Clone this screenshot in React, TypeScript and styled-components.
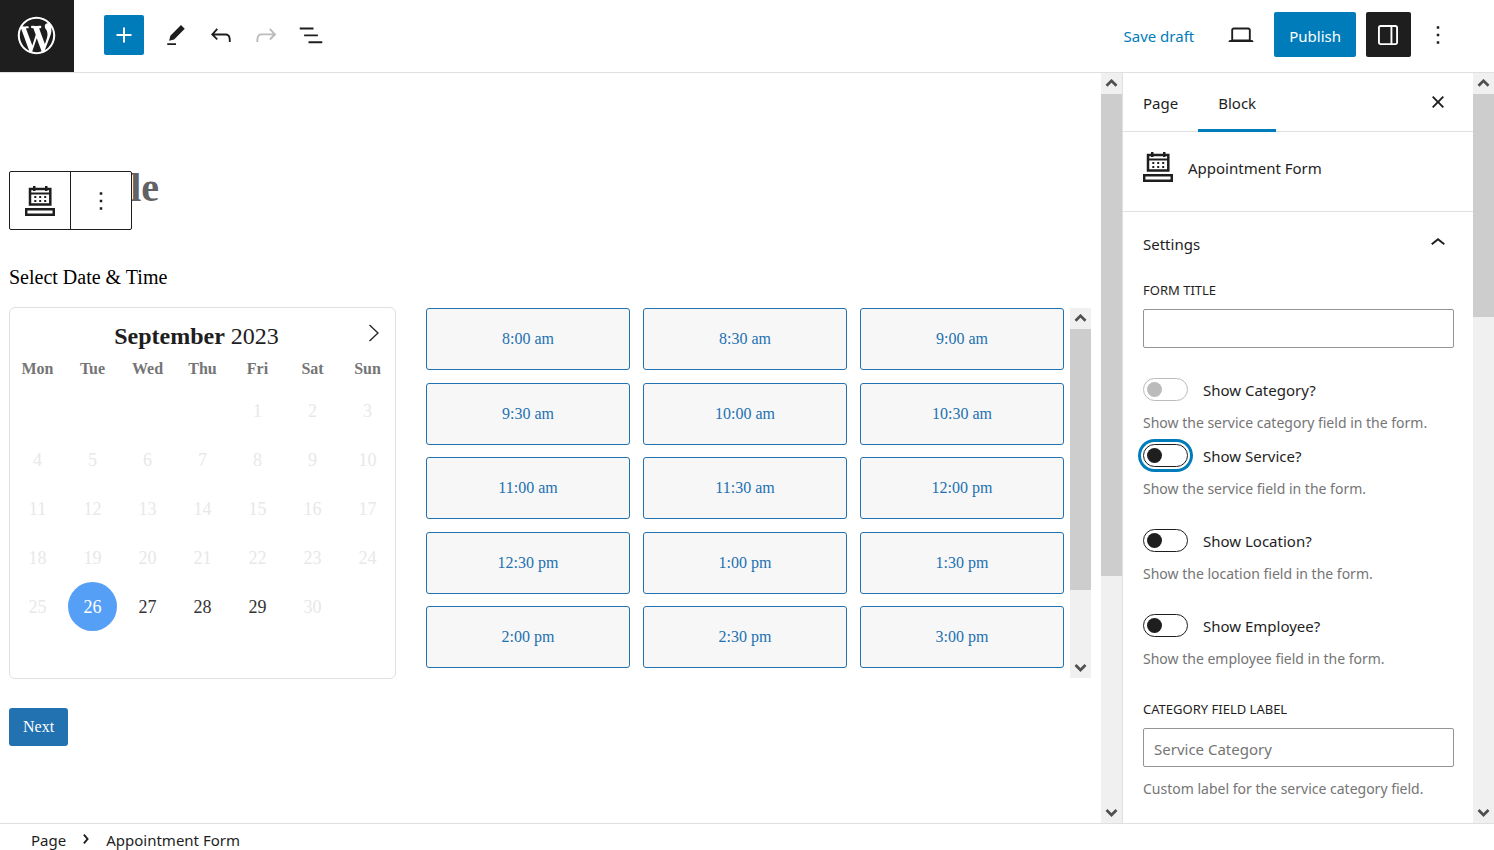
import React, { useId, useState } from "react";
import styled, { createGlobalStyle, css } from "styled-components";

const SANS = `"Noto Sans", "Open Sans", sans-serif`;
const SERIF = `"Liberation Serif", "Times New Roman", serif`;
const INK = "#1e1e1e";
const BLUE = "#007cba";
const LINE = "#e0e0e0";

const GlobalStyle = createGlobalStyle`
  *, *::before, *::after { box-sizing: border-box; }
  body { margin: 0; background: #fff; color: ${INK}; font-family: ${SANS}; font-size: 15px; line-height: 20px; }
  button, input { font: inherit; color: inherit; }
  button { padding: 0; border: 0; background: none; cursor: pointer; }
  h1, h2, p { margin: 0; font-weight: 400; }
  svg { display: block; }
`;

const Shell = styled.div`
  display: flex;
  flex-direction: column;
  height: 100vh;
  overflow: hidden;
`;

const Header = styled.header`
  display: flex;
  align-items: center;
  justify-content: space-between;
  height: 73px;
  flex: none;
  border-bottom: 1px solid ${LINE};
`;

const HeaderGroup = styled.div`
  display: flex;
  align-items: center;
  height: 72px;
`;

const LogoLink = styled.a`
  display: grid;
  place-items: center;
  width: 74px;
  height: 72px;
  margin-right: 30px;
  padding: 0 1px 1px 0;
  background: ${INK};
  color: #fff;
`;

const HeaderTools = styled.div`
  display: flex;
  align-items: center;
  padding-bottom: 2px;
`;

const InserterButton = styled.button`
  display: grid;
  place-items: center;
  width: 40px;
  height: 40px;
  margin-right: 10px;
  border-radius: 2px;
  background: ${BLUE};
  color: #fff;
`;

const IconButton = styled.button<{ $pressed?: boolean }>`
  display: grid;
  place-items: center;
  width: 45px;
  height: 45px;
  padding-right: 1px;
  border-radius: 2px;
  color: ${INK};
  ${(p) => p.$pressed && css`background: ${INK}; color: #fff;`}
  &:disabled { color: #bbb; }
`;

const HeaderActions = styled.div`
  display: flex;
  align-items: center;
  gap: 10px;
  padding: 0 38px 3px 0;
`;

const DraftButton = styled.button`
  color: ${BLUE};
  padding: 3px 15px 0 0;
`;

const PublishButton = styled.button`
  height: 45px;
  padding: 3px 15px 0;
  border-radius: 2px;
  background: ${BLUE};
  color: #fff;
`;

const MoreButton = styled(IconButton)`
  width: 35px;
`;

const Workspace = styled.div`
  display: flex;
  flex: 1;
  min-height: 0;
`;

const EditorPane = styled.main`
  display: flex;
  flex: 1;
  min-width: 0;
`;

const Canvas = styled.div`
  flex: 1;
  min-width: 0;
  overflow: hidden;
  padding: 92px 10px 0 9px;
  font-family: ${SERIF};
`;

const TitleArea = styled.div`
  position: relative;
`;

const PageTitle = styled.h1`
  font-size: 40px;
  line-height: 46px;
  font-weight: 700;
  color: #626264;
`;

const BlockToolbar = styled.div`
  position: absolute;
  top: 6px;
  left: 0;
  display: flex;
  width: 123px;
  height: 59px;
  border: 1px solid ${INK};
  border-radius: 2px;
  background: #fff;
`;

const BlockToolbarButton = styled.button`
  display: grid;
  place-items: center;
  flex: 1;
  & + & { border-left: 1px solid ${INK}; }
`;

const FormHeading = styled.h2`
  margin: 54px 0 18px;
  font-size: 20px;
  line-height: 24px;
  color: #000;
`;

const BookingRow = styled.div`
  display: flex;
  align-items: center;
  gap: 30px;
`;

const CalendarBox = styled.section`
  flex: 0 0 387px;
  height: 372px;
  border: 1px solid ${LINE};
  border-radius: 6px;
`;

const CalendarHead = styled.div`
  display: grid;
  grid-template-columns: 30px 1fr 42px;
  align-items: center;
  height: 48px;
  padding-top: 8px;
`;

const MonthLabel = styled.div`
  grid-column: 2;
  text-align: center;
  font-size: 24px;
  line-height: 28px;
`;

const NextMonthButton = styled.button`
  display: grid;
  place-items: center;
  height: 32px;
  padding-bottom: 6px;
`;

const CalendarTable = styled.table`
  width: 100%;
  table-layout: fixed;
  border-collapse: collapse;
  text-align: center;
  th { padding: 3px 0 7px; height: 30px; font-size: 16px; line-height: 20px; color: #757575; }
  td { padding: 0; height: 49px; }
`;

const DayButton = styled.button<{ $selected: boolean }>`
  width: 49px;
  height: 49px;
  border-radius: 50%;
  font-size: 18px;
  color: #333;
  &:disabled { color: #e8e8e8; }
  ${(p) => p.$selected && css`background: #569ff7; color: #fff;`}
`;

const SlotPane = styled.div`
  display: flex;
  flex: 1;
  gap: 6px;
  height: 370px;
`;

const SlotGrid = styled.div`
  display: grid;
  flex: 1;
  grid-template-columns: repeat(3, 1fr);
  grid-auto-rows: 62px;
  align-content: space-between;
  column-gap: 13px;
  height: 360px;
`;

const SlotButton = styled.button`
  border: 1px solid #2271b1;
  border-radius: 3px;
  background: #f7f7f7;
  color: #2271b1;
  font-size: 16px;
`;

const NextButton = styled.button`
  height: 38px;
  margin-top: 29px;
  padding: 0 14px;
  border-radius: 3px;
  background: #2271b1;
  color: #fff;
  font-size: 16px;
`;

const Sidebar = styled.aside`
  display: flex;
  flex: 0 0 372px;
  border-left: 1px solid ${LINE};
`;

const SidebarBody = styled.div`
  flex: 1;
  min-width: 0;
  overflow: hidden;
`;

const TabBar = styled.div`
  display: flex;
  height: 59px;
  border-bottom: 1px solid ${LINE};
`;

const Tab = styled.button<{ $active: boolean }>`
  height: 59px;
  padding: 1px 20px 0;
  ${(p) => p.$active && css`box-shadow: inset 0 -3px 0 ${BLUE};`}
`;

const CloseButton = styled.button`
  display: grid;
  place-items: center;
  width: 30px;
  margin: 0 20px 0 auto;
`;

const BlockCard = styled.div`
  display: flex;
  align-items: center;
  gap: 15px;
  height: 80px;
  padding: 0 20px;
  border-bottom: 1px solid ${LINE};
`;

const BlockName = styled.h2`
  padding-bottom: 8px;
  font-size: 15px;
  line-height: 20px;
`;

const CardIcon = styled.span`
  padding-bottom: 10px;
`;

const PanelToggle = styled.button`
  display: flex;
  align-items: center;
  justify-content: space-between;
  width: 100%;
  height: 64px;
  padding: 0 20px;
  svg { margin-bottom: 2px; }
`;

const PanelFields = styled.div`
  padding: 4px 19px 0 20px;
`;

const Field = styled.div`
  margin-bottom: 30px;
`;

const FieldLabel = styled.label`
  display: block;
  margin-bottom: 9px;
  font-size: 13px;
  line-height: 20px;
  text-transform: uppercase;
`;

const TextInput = styled.input`
  display: block;
  width: 100%;
  height: 39px;
  padding: 3px 10px 0;
  border: 1px solid #949494;
  border-radius: 2px;
  background: #fff;
  &::placeholder { color: #757575; opacity: 1; }
`;

const Help = styled.p`
  margin-top: 12px;
  font-size: 14px;
  line-height: 20px;
  color: #757575;
  white-space: nowrap;
`;

const ToggleField = styled.div<{ $tight?: boolean }>`
  margin-bottom: ${(p) => (p.$tight ? 11 : 30)}px;
`;

const ToggleRow = styled.div`
  display: flex;
  align-items: center;
  gap: 15px;
  height: 23px;
  label { padding-top: 1px; }
`;

const Switch = styled.input<{ $ring?: boolean }>`
  appearance: none;
  flex: none;
  display: flex;
  align-items: center;
  width: 45px;
  height: 23px;
  margin: 0;
  padding: 0 3px;
  border: 1px solid ${INK};
  border-radius: 12px;
  background: #fff;
  &::before {
    content: "";
    width: 15px;
    height: 15px;
    border-radius: 50%;
    background: ${INK};
  }
  &:checked { justify-content: flex-end; }
  &:disabled { border-color: #bbb; }
  &:disabled::before { background: #bbb; }
  ${(p) => p.$ring && css`box-shadow: 0 0 0 2px #fff, 0 0 0 5px ${BLUE};`}
`;

const ScrollTrack = styled.div`
  display: flex;
  flex-direction: column;
  flex: none;
  width: 21px;
  background: #f0f0f0;
`;

const ScrollArrow = styled.span`
  display: grid;
  place-items: center;
  flex: none;
  height: 21px;
`;

const ScrollThumb = styled.div<{ $size: number }>`
  flex: ${(p) => p.$size} 0 0;
  background: #cdcdcd;
`;

const ScrollRest = styled.div<{ $size: number }>`
  flex: ${(p) => p.$size} 0 0;
`;

const Footer = styled.footer`
  display: flex;
  align-items: center;
  flex: none;
  height: 27px;
  padding: 6px 0 0 31px;
  border-top: 1px solid ${LINE};
`;

const Crumb = styled.button`
  white-space: nowrap;
`;

const CrumbArrow = styled.span`
  display: grid;
  place-items: center;
  width: 40px;
  padding-bottom: 2px;
`;

const paths = {
  plus: "M18 11.2h-5.2V6h-1.6v5.2H6v1.6h5.2V18h1.6v-5.2H18z",
  edit: "m19 7-3-3-8.5 8.5-1 4 4-1L19 7Zm-7 11.5H5V20h7v-1.5Z",
  undo: "M18.3 11.7c-.6-.6-1.4-.9-2.3-.9H6.7l2.9-3.3-1.1-1-4.5 5L8.5 16l1-1-2.7-2.7H16c.5 0 .9.2 1.3.5 1 1 1 3.4 1 4.5v.3h1.5v-.2c0-1.5 0-4.3-1.5-5.7z",
  redo: "M15.6 6.5l-1.1 1 2.9 3.3H8c-.9 0-1.7.3-2.3.9-1.4 1.5-1.4 4.2-1.4 5.6v.2h1.5v-.3c0-1.1 0-3.5 1-4.5.3-.3.7-.5 1.3-.5h9.2L14.5 15l1.1 1.1 4.6-4.6-4.6-5z",
  list: "M3 6h11v1.5H3V6Zm3.5 5.5h11V13h-11v-1.5ZM21 17H10v1.5h11V17Z",
  laptop: "M20.5 16h-.7V8c0-1.1-.9-2-2-2H6.2c-1.1 0-2 .9-2 2v8h-.7c-.8 0-1.5.7-1.5 1.5h20c0-.8-.7-1.5-1.5-1.5zM5.7 8c0-.3.2-.5.5-.5h11.6c.3 0 .5.2.5.5v7.6H5.7V8z",
  drawer: "M18 4H6c-1.1 0-2 .9-2 2v12c0 1.1.9 2 2 2h12c1.1 0 2-.9 2-2V6c0-1.1-.9-2-2-2zm-4 14.5H6c-.3 0-.5-.2-.5-.5V6c0-.3.2-.5.5-.5h8v13zm4.5-.5c0 .3-.2.5-.5.5h-2.5v-13H18c.3 0 .5.2.5.5v12z",
  more: "M13 19h-2v-2h2v2zm0-6h-2v-2h2v2zm0-6h-2V5h2v2z",
  close: "M12 13.06l3.712 3.713 1.061-1.06L13.061 12l3.712-3.712-1.06-1.06L12 10.938 8.288 7.227l-1.061 1.06L10.939 12l-3.712 3.712 1.06 1.061L12 13.061z",
  chevronUp: "M6.5 12.4L12 8l5.5 4.4-.9 1.2L12 10l-4.5 3.6-1-1.2z",
  chevronRight: "M10.8622 8.04053L14.2805 12.0286L10.8622 16.0167L9.72327 15.0405L12.3049 12.0286L9.72327 9.01672L10.8622 8.04053Z",
};

const Icon = ({ name }: { name: keyof typeof paths }) => (
  <svg width="30" height="30" viewBox="0 0 24 24" fill="currentColor" aria-hidden="true">
    <path d={paths[name]} />
  </svg>
);

const WordPressLogo = () => (
  <svg width="45" height="45" viewBox="-2 -2 24 24" fill="currentColor" aria-hidden="true">
    <path d="M20 10c0-5.51-4.49-10-10-10C4.48 0 0 4.49 0 10c0 5.52 4.48 10 10 10 5.51 0 10-4.48 10-10zM7.78 15.37L4.37 6.22c.55-.02 1.17-.08 1.17-.08.5-.06.44-1.13-.06-1.11 0 0-1.45.11-2.37.11-.18 0-.37 0-.58-.01C4.12 2.69 6.87 1.11 10 1.11c2.33 0 4.45.87 6.05 2.34-.68-.11-1.65.39-1.65 1.58 0 .74.45 1.36.9 2.1.35.61.55 1.36.55 2.46 0 1.49-1.4 5-1.4 5l-3.03-8.37c.54-.02.82-.17.82-.17.5-.05.44-1.25-.06-1.22 0 0-1.44.12-2.38.12-.87 0-2.33-.12-2.33-.12-.5-.03-.56 1.2-.06 1.22l.92.08 1.26 3.41zM17.41 10c.24-.64.74-1.87.43-4.25.7 1.29 1.05 2.71 1.05 4.25 0 3.29-1.73 6.24-4.4 7.78.97-2.59 1.94-5.2 2.92-7.78zM6.1 18.09C3.12 16.65 1.11 13.53 1.11 10c0-1.3.23-2.48.72-3.59C3.25 10.3 4.67 14.2 6.1 18.09zm4.03-6.63l2.58 6.98c-.86.29-1.76.45-2.71.45-.79 0-1.57-.11-2.29-.33.81-2.38 1.62-4.74 2.42-7.1z" />
  </svg>
);

const AppointmentIcon = () => (
  <svg width="30" height="30" viewBox="0 0 30 30" aria-hidden="true">
    <g fill="none" stroke={INK} strokeWidth="2.500">
      <path d="M5 3h20.300v15.500H5z" />
      <path d="M5 7.500h20.300" strokeWidth="2" />
      <path d="M1.200 23.300h27.600v5.400H1.200z" />
    </g>
    <path fill={INK} d="M8 0h2.500v5H8zM20 0h2.500v5h-2.500zM9.300 10h2v2h-2zM14.200 10h2v2h-2zM19.200 10h2v2h-2zM9.300 14h2v2h-2zM14.200 14h2v2h-2zM19.200 14h2v2h-2z" />
  </svg>
);

const ArrowGlyph = ({ down }: { down?: boolean }) => (
  <svg width="13" height="9" viewBox="0 0 13 9" fill="none" stroke="#505050" strokeWidth="2.700" aria-hidden="true">
    <path d={down ? "M1.500 2l5 5 5-5" : "M1.500 6.800l5-5 5 5"} />
  </svg>
);

function Scrollbar({ thumb, rest }: { thumb: number; rest: number }) {
  return (
    <ScrollTrack aria-hidden="true">
      <ScrollArrow><ArrowGlyph /></ScrollArrow>
      <ScrollThumb $size={thumb} />
      <ScrollRest $size={rest} />
      <ScrollArrow><ArrowGlyph down /></ScrollArrow>
    </ScrollTrack>
  );
}

const weekdays = ["Mon", "Tue", "Wed", "Thu", "Fri", "Sat", "Sun"];
const weeks = [0, 1, 2, 3, 4].map((w) =>
  weekdays.map((_, d) => {
    const day = w * 7 + d - 3;
    return day >= 1 && day <= 30 ? day : null;
  })
);
const openDays = [26, 27, 28, 29];
const slots = [
  "8:00 am", "8:30 am", "9:00 am", "9:30 am", "10:00 am", "10:30 am", "11:00 am", "11:30 am",
  "12:00 pm", "12:30 pm", "1:00 pm", "1:30 pm", "2:00 pm", "2:30 pm", "3:00 pm",
];

function Calendar() {
  const [selected, setSelected] = useState(26);
  return (
    <CalendarBox aria-label="Date">
      <CalendarHead>
        <MonthLabel><b>September</b> 2023</MonthLabel>
        <NextMonthButton aria-label="Next month">
          <svg width="12" height="18" viewBox="0 0 12 18" fill="none" stroke="#222" strokeWidth="1.300" aria-hidden="true">
            <path d="M1.500 1l8.500 8-8.500 8" />
          </svg>
        </NextMonthButton>
      </CalendarHead>
      <CalendarTable>
        <thead>
          <tr>{weekdays.map((d) => <th key={d} scope="col">{d}</th>)}</tr>
        </thead>
        <tbody>
          {weeks.map((week, i) => (
            <tr key={i}>
              {week.map((day, j) => (
                <td key={j}>
                  {day && (
                    <DayButton
                      $selected={day === selected}
                      disabled={!openDays.includes(day)}
                      onClick={() => setSelected(day)}
                    >
                      {day}
                    </DayButton>
                  )}
                </td>
              ))}
            </tr>
          ))}
        </tbody>
      </CalendarTable>
    </CalendarBox>
  );
}

interface ToggleProps {
  label: string;
  help: string;
  disabled?: boolean;
  ring?: boolean;
  tight?: boolean;
}

function ToggleControl({ label, help, disabled, ring, tight }: ToggleProps) {
  const id = useId();
  return (
    <ToggleField $tight={tight}>
      <ToggleRow>
        <Switch id={id} type="checkbox" disabled={disabled} $ring={ring} />
        <label htmlFor={id}>{label}</label>
      </ToggleRow>
      <Help>{help}</Help>
    </ToggleField>
  );
}

function TextControl({ label, placeholder, help }: { label: string; placeholder?: string; help?: string }) {
  const id = useId();
  return (
    <Field>
      <FieldLabel htmlFor={id}>{label}</FieldLabel>
      <TextInput id={id} type="text" placeholder={placeholder} />
      {help && <Help>{help}</Help>}
    </Field>
  );
}

export default function App() {
  const [tab, setTab] = useState("Block");
  return (
    <>
      <GlobalStyle />
      <Shell>
        <Header>
          <HeaderGroup>
            <LogoLink href="#" aria-label="View pages"><WordPressLogo /></LogoLink>
            <HeaderTools>
              <InserterButton aria-label="Add block"><Icon name="plus" /></InserterButton>
              <IconButton aria-label="Tools"><Icon name="edit" /></IconButton>
              <IconButton aria-label="Undo"><Icon name="undo" /></IconButton>
              <IconButton aria-label="Redo" disabled><Icon name="redo" /></IconButton>
              <IconButton aria-label="Document overview"><Icon name="list" /></IconButton>
            </HeaderTools>
          </HeaderGroup>
          <HeaderActions>
            <DraftButton>Save draft</DraftButton>
            <IconButton aria-label="Preview"><Icon name="laptop" /></IconButton>
            <PublishButton>Publish</PublishButton>
            <IconButton aria-label="Settings" $pressed><Icon name="drawer" /></IconButton>
            <MoreButton aria-label="Options"><Icon name="more" /></MoreButton>
          </HeaderActions>
        </Header>

        <Workspace>
          <EditorPane>
            <Canvas>
              <TitleArea>
                <PageTitle>Add title</PageTitle>
                <BlockToolbar>
                  <BlockToolbarButton aria-label="Appointment Form"><AppointmentIcon /></BlockToolbarButton>
                  <BlockToolbarButton aria-label="Options"><Icon name="more" /></BlockToolbarButton>
                </BlockToolbar>
              </TitleArea>
              <FormHeading>Select Date &amp; Time</FormHeading>
              <BookingRow>
                <Calendar />
                <SlotPane>
                  <SlotGrid>
                    {slots.map((s) => <SlotButton key={s}>{s}</SlotButton>)}
                  </SlotGrid>
                  <Scrollbar thumb={261} rest={67} />
                </SlotPane>
              </BookingRow>
              <NextButton>Next</NextButton>
            </Canvas>
            <Scrollbar thumb={482} rest={226} />
          </EditorPane>

          <Sidebar>
            <SidebarBody>
              <TabBar>
                {["Page", "Block"].map((t) => (
                  <Tab key={t} $active={t === tab} onClick={() => setTab(t)}>{t}</Tab>
                ))}
                <CloseButton aria-label="Close settings"><Icon name="close" /></CloseButton>
              </TabBar>
              <BlockCard>
                <CardIcon><AppointmentIcon /></CardIcon>
                <BlockName>Appointment Form</BlockName>
              </BlockCard>
              <PanelToggle aria-expanded="true">
                Settings
                <Icon name="chevronUp" />
              </PanelToggle>
              <PanelFields>
                <TextControl label="Form title" />
                <ToggleControl label="Show Category?" help="Show the service category field in the form." disabled tight />
                <ToggleControl label="Show Service?" help="Show the service field in the form." ring />
                <ToggleControl label="Show Location?" help="Show the location field in the form." />
                <ToggleControl label="Show Employee?" help="Show the employee field in the form." />
                <TextControl
                  label="Category field label"
                  placeholder="Service Category"
                  help="Custom label for the service category field."
                />
              </PanelFields>
            </SidebarBody>
            <Scrollbar thumb={223} rest={485} />
          </Sidebar>
        </Workspace>

        <Footer>
          <Crumb>Page</Crumb>
          <CrumbArrow><Icon name="chevronRight" /></CrumbArrow>
          <Crumb>Appointment Form</Crumb>
        </Footer>
      </Shell>
    </>
  );
}
